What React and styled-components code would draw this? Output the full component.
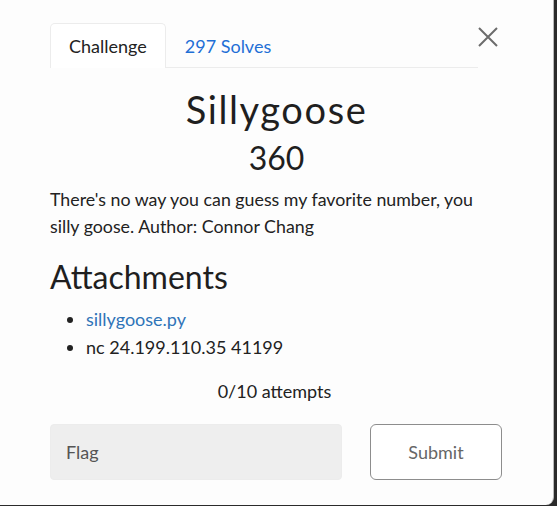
import React from "react";
import styled, { createGlobalStyle } from "styled-components";

const GlobalStyle = createGlobalStyle`
  html, body {
    margin: 0;
    padding: 0;
    background: #2b2b2b;
  }
  body {
    font-family: Lato, "Open Sans", sans-serif;
    color: #222;
  }
`;

const Modal = styled.div`
  width: 554px;
  height: 505px;
  background: #fdfdfd;
  border-right: 1px solid #b9b9b9;
  border-bottom-right-radius: 8px;
  box-sizing: border-box;
  position: relative;
  padding: 23px 50px 0 50px;
`;

const CloseButton = styled.button`
  position: absolute;
  top: 25px;
  right: 53px;
  width: 24px;
  height: 24px;
  padding: 0;
  border: none;
  background: none;
  cursor: pointer;
  color: #6c6c6c;
`;

const TabBar = styled.div`
  display: flex;
  width: 428px;
  border-bottom: 1px solid #ececec;
`;

const Tab = styled.div`
  height: 45px;
  padding: 0 18px;
  display: flex;
  align-items: center;
  font-size: 18px;
  box-sizing: border-box;
  color: ${(p) => (p.$active ? "#222" : "#1f6fd6")};
  border: 1px solid ${(p) => (p.$active ? "#ececec" : "transparent")};
  border-bottom: none;
  border-radius: 5px 5px 0 0;
  background: ${(p) => (p.$active ? "#fff" : "transparent")};
  margin-bottom: -1px;
`;

const Title = styled.h1`
  margin: 19px 0 0;
  text-align: center;
  font-weight: 400;
  font-size: 38px;
  letter-spacing: 1.6px;
  line-height: 44px;
  color: #1f1f1f;
`;

const Points = styled.div`
  text-align: center;
  font-size: 32px;
  line-height: 36px;
  margin-top: 9px;
  color: #1f1f1f;
`;

const Description = styled.p`
  margin: 10px 0 0;
  font-size: 17.8px;
  line-height: 27px;
  color: #222;
`;

const Heading = styled.h2`
  margin: 18px 0 0;
  font-weight: 400;
  font-size: 32px;
  line-height: 38px;
  color: #1f1f1f;
`;

const List = styled.ul`
  margin: 9px 0 0;
  padding-left: 36px;
  font-size: 18px;
  line-height: 28px;
`;

const Item = styled.li`
  color: #222;
`;

const FileLink = styled.a`
  color: #2f74b8;
  text-decoration: none;
`;

const Attempts = styled.div`
  text-align: center;
  font-size: 18px;
  line-height: 22px;
  margin-top: 19px;
  padding-right: 4px;
`;

const SubmitRow = styled.div`
  display: grid;
  grid-template-columns: 292px 132px;
  column-gap: 28px;
  margin-top: 22px;
`;

const FlagInput = styled.input`
  height: 56px;
  box-sizing: border-box;
  border: 1px solid #ececec;
  border-radius: 4px;
  background: #eeeeee;
  padding: 0 15px;
  font-family: Lato, sans-serif;
  font-size: 18px;
  color: #444;
  outline: none;
  &::placeholder {
    color: #555;
  }
`;

const SubmitButton = styled.button`
  height: 56px;
  border: 1px solid #8d8d8d;
  border-radius: 6px;
  background: #fff;
  font-family: Lato, sans-serif;
  font-size: 18px;
  color: #666;
  cursor: pointer;
`;

export default function App() {
  return (
    <>
      <GlobalStyle />
      <Modal>
        <CloseButton aria-label="Close">
          <svg width="24" height="24" viewBox="0 0 24 24">
            <path d="M3 3 L21 21 M21 3 L3 21" stroke="currentColor" strokeWidth="2" />
          </svg>
        </CloseButton>
        <TabBar>
          <Tab $active>Challenge</Tab>
          <Tab>297 Solves</Tab>
        </TabBar>
        <Title>Sillygoose</Title>
        <Points>360</Points>
        <Description>
          There's no way you can guess my favorite number, you silly goose. Author: Connor Chang
        </Description>
        <Heading>Attachments</Heading>
        <List>
          <Item>
            <FileLink href="#">sillygoose.py</FileLink>
          </Item>
          <Item>nc 24.199.110.35 41199</Item>
        </List>
        <Attempts>0/10 attempts</Attempts>
        <SubmitRow>
          <FlagInput placeholder="Flag" />
          <SubmitButton>Submit</SubmitButton>
        </SubmitRow>
      </Modal>
    </>
  );
}
